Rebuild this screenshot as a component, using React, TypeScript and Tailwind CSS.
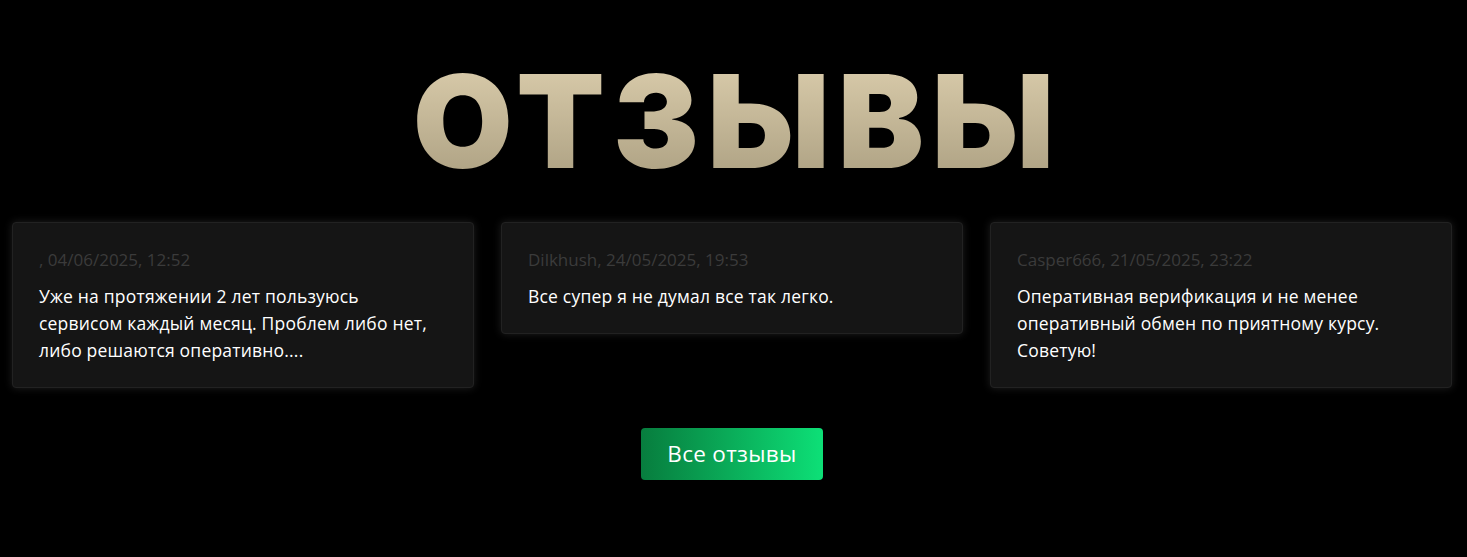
const reviews = [
  { meta: ", 04/06/2025, 12:52", text: "Уже на протяжении 2 лет пользуюсь сервисом каждый месяц. Проблем либо нет, либо решаются оперативно...." },
  { meta: "Dilkhush, 24/05/2025, 19:53", text: "Все супер я не думал все так легко." },
  { meta: "Casper666, 21/05/2025, 23:22", text: "Оперативная верификация и не менее оперативный обмен по приятному курсу. Советую!" },
];

export default function App() {
  return (
    <div className="min-h-[557px] bg-black font-['Open_Sans','Noto_Sans',sans-serif] pt-[53px]">
      <h1 className="text-center font-['Inter',sans-serif] font-black text-[129px] leading-[136px] tracking-[8px] pl-[8px] bg-gradient-to-b from-[#ddcfae] to-[#aa9e80] bg-clip-text text-transparent w-fit mx-auto">
        ОТЗЫВЫ
      </h1>
      <div className="grid grid-cols-3 gap-[27px] items-start pl-[12px] pr-[15px] mt-[33px]">
        {reviews.map((r) => (
          <div key={r.meta} className="bg-[#151515] border border-[#222] rounded-[4px] shadow-[0_0_8px_rgba(255,255,255,0.12)] pl-[26px] pr-[30px] pt-[27px] pb-[23px]">
            <div className="text-[17px] leading-[20px] text-[#3b3b3b]">{r.meta}</div>
            <p className="mt-[13px] text-[17.5px] leading-[27px] tracking-[0.2px] text-white">{r.text}</p>
          </div>
        ))}
      </div>
      <div className="flex justify-center mt-[40px] pr-[3px]">
        <button className="w-[182px] h-[52px] rounded-[4px] bg-gradient-to-r from-[#077d3e] to-[#0de077] text-white text-[22.5px] tracking-[0.3px]">
          Все отзывы
        </button>
      </div>
    </div>
  );
}
